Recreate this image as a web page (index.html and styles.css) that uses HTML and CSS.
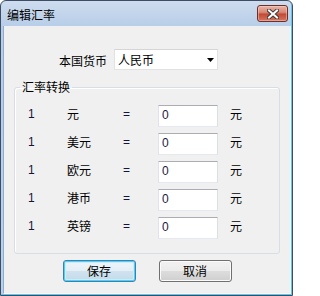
FILE: index.html
```html
<!DOCTYPE html>
<html lang="zh-CN">
<head>
<meta charset="utf-8">
<title>编辑汇率</title>
<link rel="stylesheet" href="styles.css">
</head>
<body>
<div class="window">
  <div class="titlebar">
    <span class="title">编辑汇率</span>
    <button class="close" aria-label="关闭">
      <svg width="12" height="10" viewBox="0 0 12 10">
        <path d="M2 1.5 L10 8.5 M10 1.5 L2 8.5" stroke="#3c3c3c" stroke-width="4" stroke-linecap="square" fill="none"/>
        <path d="M2 1.5 L10 8.5 M10 1.5 L2 8.5" stroke="#ffffff" stroke-width="2" stroke-linecap="square" fill="none"/>
      </svg>
    </button>
  </div>
  <div class="client">
    <div class="currency-row">
      <span class="label">本国货币</span>
      <div class="combo">
        <span class="combo-text">人民币</span>
        <svg class="arrow" width="7" height="4" viewBox="0 0 7 4"><polygon points="0,0 7,0 3.5,4" fill="#000"/></svg>
      </div>
    </div>
    <fieldset class="group">
      <legend>汇率转换</legend>
      <div class="rates">
        <span class="one">1</span><span class="name">元</span><span class="eq">=</span><input class="rate" value="0"><span class="unit">元</span>
        <span class="one">1</span><span class="name">美元</span><span class="eq">=</span><input class="rate" value="0"><span class="unit">元</span>
        <span class="one">1</span><span class="name">欧元</span><span class="eq">=</span><input class="rate" value="0"><span class="unit">元</span>
        <span class="one">1</span><span class="name">港币</span><span class="eq">=</span><input class="rate" value="0"><span class="unit">元</span>
        <span class="one">1</span><span class="name">英镑</span><span class="eq">=</span><input class="rate" value="0"><span class="unit">元</span>
      </div>
    </fieldset>
    <div class="buttons">
      <button class="btn btn-default">保存</button>
      <button class="btn">取消</button>
    </div>
  </div>
</div>
</body>
</html>
```
FILE: styles.css
```css
html, body {
  margin: 0;
  padding: 0;
}
body {
  width: 293px;
  height: 296px;
  overflow: hidden;
  font-family: "Liberation Sans", "Noto Sans CJK SC", sans-serif;
  font-size: 12px;
  color: #000;
  background: #fff;
}
.window {
  box-sizing: border-box;
  width: 293px;
  height: 296px;
  border: 1px solid #3d4d63;
  border-radius: 6px 6px 0 0;
  background: linear-gradient(#cedcee 0, #b7cde8 26px, #b9d1ea 100%);
  box-shadow: inset -1px -1px 0 #5cc8ee;
  display: flex;
  flex-direction: column;
}
.titlebar {
  height: 25px;
  display: flex;
  justify-content: space-between;
  align-items: flex-start;
  padding-left: 6px;
}
.title {
  font-family: "Noto Sans CJK SC", sans-serif;
  font-size: 12px;
  line-height: 14px;
  margin-top: 7px;
}
.close {
  box-sizing: border-box;
  width: 31px;
  height: 17px;
  margin: 4px 4px 0 0;
  padding: 0;
  border: 1px solid #6b3027;
  border-radius: 3px;
  background: linear-gradient(#eab3a5 0%, #d98876 42%, #c44a35 55%, #d47561 100%);
  box-shadow: inset 0 0 0 1px rgba(255, 220, 210, 0.45);
  display: flex;
  align-items: center;
  justify-content: center;
}
.close svg {
  display: block;
}
.client {
  flex: 1;
  margin: 0 1px 1px 2px;
  background: #f0f0f0;
  border-left: 1px solid #8fadd2;
  border-right: 1px solid #f6f9fc;
  border-bottom: 1px solid #f6f9fc;
  display: flex;
  flex-direction: column;
}
.currency-row {
  margin-top: 23px;
  padding-left: 55px;
  height: 21px;
  display: flex;
  align-items: center;
  gap: 7px;
}
.label {
  font-family: "Noto Sans CJK SC", sans-serif;
  line-height: 14px;
  margin-top: 2px;
}
.combo {
  box-sizing: border-box;
  width: 104px;
  height: 21px;
  background: #fff;
  border: 1px solid #e2e2e2;
  border-top-color: #d5d5d5;
  display: flex;
  align-items: center;
  justify-content: space-between;
  padding: 0 3px 0 3px;
}
.combo-text {
  font-family: "Noto Sans CJK SC", sans-serif;
  line-height: 14px;
}
.group {
  margin: 10px 10px 0 10px;
  padding: 11px 0 14px 5px;
  border: 1px solid #d5dfe5;
  border-radius: 3px;
  box-shadow: 0 0 0 0 #fff, inset 1px 1px 0 #ffffff;
  min-width: 0;
}
.group legend {
  padding: 0 2px;
  font-family: "Noto Sans CJK SC", sans-serif;
  line-height: 14px;
}
.rates {
  margin-left: 8px;
  display: grid;
  grid-template-columns: 39px 56px 35px 72px auto;
  grid-auto-rows: 22px;
  row-gap: 6px;
  align-items: start;
}
.one, .eq {
  color: #15153a;
  line-height: 18px;
}
.name, .unit {
  font-family: "Noto Sans CJK SC", sans-serif;
  line-height: 18px;
}
.rate {
  box-sizing: border-box;
  width: 60px;
  height: 22px;
  margin: 0;
  padding: 0 3px 3px 3px;
  border: 1px solid;
  border-color: #abadb3 #dbdfe6 #e3e9ef #e2e3ea;
  background: #fff;
  font-family: "Liberation Sans", sans-serif;
  font-size: 12px;
  color: #1a1a40;
  outline: none;
}
.buttons {
  margin-top: 6px;
  display: flex;
  justify-content: center;
  gap: 23px;
}
.btn {
  box-sizing: border-box;
  width: 73px;
  height: 22px;
  padding: 0;
  border: 1px solid #707070;
  border-radius: 3px;
  background: linear-gradient(#f2f2f2 0%, #ebebeb 50%, #dddddd 50%, #cfcfcf 100%);
  box-shadow: inset 0 0 0 1px #fbfbfb;
  font-family: "Noto Sans CJK SC", sans-serif;
  font-size: 12px;
  line-height: 14px;
  color: #000;
}
.btn-default {
  border-color: #3c7fb1;
  background: linear-gradient(#eef5f9 0%, #e3eef5 50%, #d0e2ee 50%, #c4dbea 100%);
  box-shadow: inset 0 0 0 1px #4fd0f5, inset 0 0 0 2px #c8eefb;
}
```
